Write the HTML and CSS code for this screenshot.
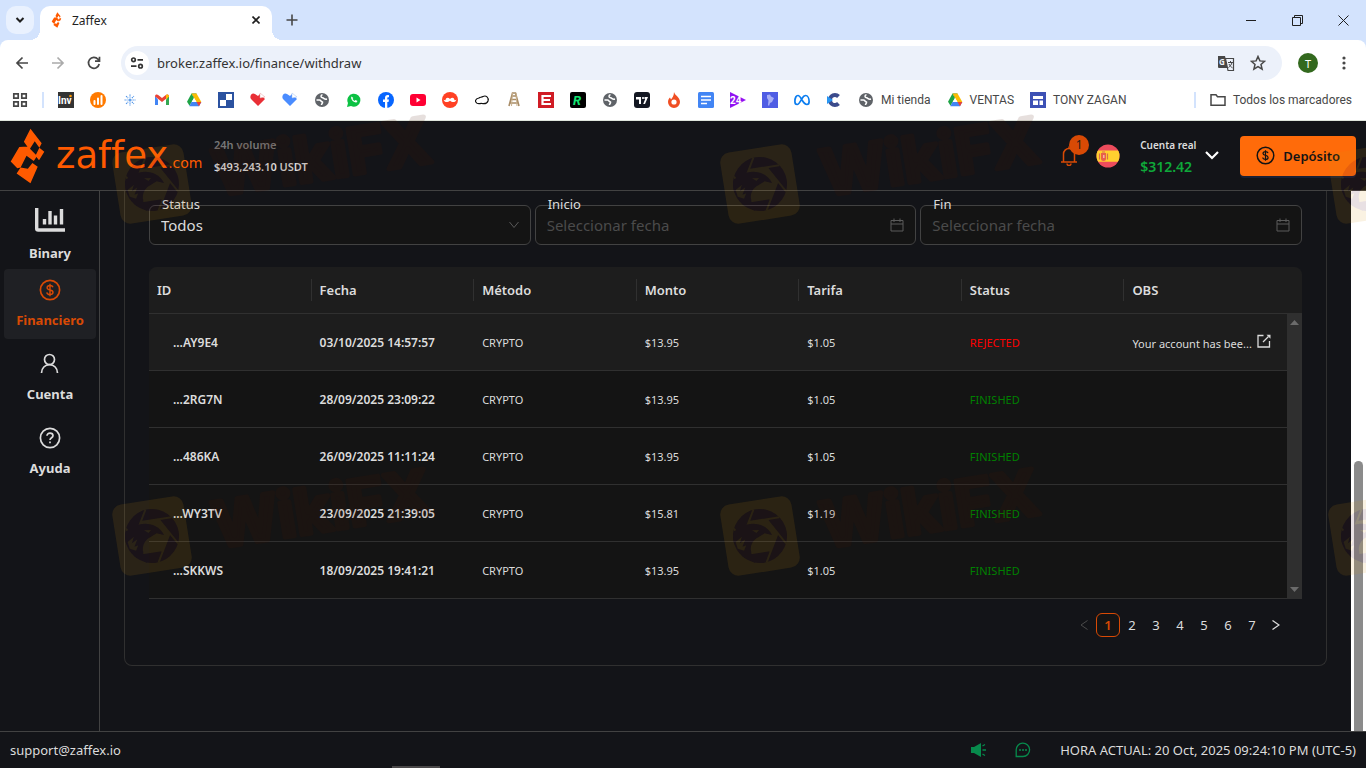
FILE: index.html
```html
<!DOCTYPE html>
<html lang="es">
<head>
    <meta charset="UTF-8">
    <meta name="viewport" content="width=device-width, initial-scale=1.0">
    <title>Zaffex</title>
    <link rel="stylesheet" href="styles.css">
</head>
<body>
    <!-- shared icons -->
    <svg class="sprite" aria-hidden="true">
        <symbol id="zaffex" viewBox="0 0 106 170">
            <path d="M62 2 96 46 89 60 104 72 88 98 77 84 89 60 75 40 59 65 42 42ZM28 58 54 56 82 85 72 100 50 84 32 120 22 122 2 102ZM32 120 54 124 68 106 84 118 62 168 20 138Z"/>
        </symbol>
        <symbol id="globe" viewBox="0 0 16 16">
            <circle cx="8" cy="8" r="7" fill="#5f6368"/>
            <path d="M2.500 8h3c1.500 0 1.500 2 3 2 .5 1.500-1 1.500-1 3M8.500 2.800c-2 .3-2 2.700 0 3s1.500 2 4.500 1.200" fill="none" stroke="#fff" stroke-width="1.500"/>
        </symbol>
        <symbol id="drive" viewBox="0 0 16 16">
            <path d="M5.500 1.500h5L8 6Z" fill="#188038"/>
            <path d="M5.500 1.500 8 6 3.500 13.800 1 9.800Z" fill="#1ea446"/>
            <path d="M5.500 1.500h5L15.300 10h-4.800Z" fill="#fbbc04"/>
            <path d="M5.500 10h9.800L13 14.200H3.300Z" fill="#4285f4"/>
            <path d="M10.500 10h4.800L13 14.200Z" fill="#ea4335"/>
            <path d="M8 6 5.700 10h4.700Z" fill="#fff"/>
        </symbol>
        <symbol id="dollar" viewBox="0 0 22 22">
            <g fill="none" stroke="currentColor" stroke-width="1.700">
                <circle cx="11" cy="11" r="9.600"/>
                <path d="M14 8.300C13.600 7 12.500 6.500 11 6.500c-1.700 0-2.900.8-2.900 2.200 0 3.200 5.900 1.300 5.900 4.500 0 1.500-1.300 2.300-3 2.300s-3-.8-3.200-2.200M11 4.800v12.400" stroke-width="1.400"/>
            </g>
        </symbol>
        <symbol id="calendar" viewBox="0 0 14 14">
            <path d="M1 2.500h12v10.500H1ZM1 6h12M4 .5v3.500M10 .5v3.500" fill="none" stroke="currentColor"/>
        </symbol>
        <!-- eagle inside a camera shutter -->
        <symbol id="lens" overflow="visible">
            <circle cx="40" cy="84" r="27" class="lens-solid"/>
            <path class="lens-gap" d="M58 84 49 99.600H31L22 84 31 68.400H49Z"/>
            <path class="lens-line" d="M58 84 42.500 110.900M49 99.600H18M31 99.600 15.400 72.700M22 84 37.500 57.100M31 68.400H62M49 68.400 64.600 95.300"/>
            <path class="lens-solid" d="M14 77C24 67 47 68 52 85L45 82 38 85C29 88 26 97 31 110L19 101 13 86Z"/>
            <path class="lens-gap" d="m33 77 7 1-3 2.500ZM15 86l7-4-3 6 6-3-4 7 4-1-3 5-6-3Z"/>
        </symbol>
        <mask id="lens-in" maskUnits="userSpaceOnUse" x="0" y="40" width="84" height="84">
            <use href="#lens" class="mask-in"/>
        </mask>
        <mask id="lens-out" maskUnits="userSpaceOnUse" x="0" y="40" width="84" height="84">
            <rect x="0" y="40" width="84" height="84" fill="#fff"/>
            <use href="#lens" class="mask-out"/>
        </mask>
        <symbol id="watermark" viewBox="0 0 340 120" overflow="visible">
            <g transform="rotate(-9 40 84)">
                <rect x="4" y="48" width="72" height="72" rx="10" fill="#d29614" fill-opacity=".12" mask="url(#lens-out)"/>
                <rect x="4" y="48" width="72" height="72" fill="#4a1024" fill-opacity=".13" mask="url(#lens-in)"/>
                <text x="102" y="106" class="mark-text">WikiFX</text>
            </g>
        </symbol>
    </svg>

    <div class="browser">
        <div class="tab-strip">
            <button class="tab-search" aria-label="Buscar pestañas">
                <svg width="10" height="8" viewBox="0 0 10 8"><path d="m1.500 2 3.500 3.500L8.500 2" fill="none" stroke="#1f1f1f" stroke-width="2"/></svg>
            </button>
            <div class="tab">
                <svg class="tab-icon" width="11" height="16" fill="#ff5a00"><use href="#zaffex"/></svg>
                <span class="tab-title">Zaffex</span>
                <button class="plain" aria-label="Cerrar pestaña">
                    <svg width="8" height="8" viewBox="0 0 8 8"><path d="m.5.5 7 7m0-7-7 7" stroke="#1f1f1f" stroke-width="1.600"/></svg>
                </button>
            </div>
            <button class="plain new-tab" aria-label="Nueva pestaña">
                <svg width="12" height="12" viewBox="0 0 12 12"><path d="M6 .5v11M.5 6h11" stroke="#474747" stroke-width="1.600"/></svg>
            </button>
            <div class="window-buttons">
                <button class="plain" aria-label="Minimizar"><svg width="10" height="10"><path d="M0 5.500h10" stroke="#1f1f1f"/></svg></button>
                <button class="plain" aria-label="Restaurar"><svg width="11" height="11"><path d="M.5 2.500h8v8h-8ZM2.500 2.500v-2h8v8h-2" fill="none" stroke="#1f1f1f"/></svg></button>
                <button class="plain" aria-label="Cerrar"><svg width="11" height="11"><path d="m.5.5 10 10m0-10-10 10" stroke="#1f1f1f"/></svg></button>
            </div>
        </div>

        <div class="toolbar">
            <button class="plain nav-btn" aria-label="Atrás"><svg width="14" height="14" viewBox="0 0 14 14"><path d="M13 7H2m5.500-5.500L2 7l5.500 5.500" fill="none" stroke="#474747" stroke-width="1.700"/></svg></button>
            <button class="plain nav-btn" aria-label="Adelante"><svg width="14" height="14" viewBox="0 0 14 14"><path d="M1 7h11M6.500 1.500 12 7l-5.500 5.500" fill="none" stroke="#ababab" stroke-width="1.700"/></svg></button>
            <button class="plain nav-btn" aria-label="Recargar"><svg width="14" height="14" viewBox="0 0 14 14"><path d="M12.200 8A5.400 5.400 0 1 1 11 3.300L12 4.500M12.500.8v4.400H8" fill="none" stroke="#474747" stroke-width="1.700"/></svg></button>
            <div class="address">
                <button class="site-info" aria-label="Información del sitio">
                    <svg width="14" height="12" viewBox="0 0 14 12"><g fill="none" stroke="#333" stroke-width="1.700"><circle cx="3.500" cy="2.800" r="1.800"/><path d="M7.500 2.800H13M1 9.200h5.500"/><circle cx="10.500" cy="9.200" r="1.800"/></g></svg>
                </button>
                <input class="url" type="text" value="broker.zaffex.io/finance/withdraw" aria-label="Dirección">
                <button class="plain" aria-label="Traducir">
                    <svg width="18" height="17" viewBox="0 0 18 17"><path d="M1 1h7l3 12H2a1 1 0 0 1-1-1Z" fill="#474747"/><path d="M8.500 3.500H16.500v12H11L8.500 3.500Z" fill="#ecf1fa" stroke="#474747" stroke-width="1.200"/><text x="2" y="10" class="tiny-g">G</text><path d="M11 7.500h5M13.500 6v1.500M15 7.500c-.5 2-2 4-3.500 5M12 9c1 2 2 3 3.500 3.800" fill="none" stroke="#474747"/></svg>
                </button>
                <button class="plain star" aria-label="Añadir a marcadores">
                    <svg width="16" height="16" viewBox="0 0 16 16"><path d="m8 1.500 1.900 4.400 4.700.4-3.600 3.100 1.100 4.700L8 11.600l-4.100 2.500L5 9.400 1.400 6.300l4.700-.4Z" fill="none" stroke="#474747" stroke-width="1.500"/></svg>
                </button>
            </div>
            <button class="avatar" aria-label="Perfil">T</button>
            <button class="plain" aria-label="Menú"><svg width="4" height="14" fill="#474747"><circle cx="2" cy="2" r="1.600"/><circle cx="2" cy="7" r="1.600"/><circle cx="2" cy="12" r="1.600"/></svg></button>
        </div>

        <nav class="bookmarks">
            <svg width="16" height="16" class="apps"><path d="M1.800 1.800h4.400v4.400H1.800ZM9.800 1.800h4.400v4.400H9.800ZM1.800 9.800h4.400v4.400H1.800ZM9.800 9.800h4.400v4.400H9.800Z" fill="none" stroke="#474747" stroke-width="1.700"/></svg>
            <span class="divider"></span>
            <svg width="16" height="16"><path d="M0 0h16v16H0Z" fill="#333"/><text x="0" y="12" class="inv">Inv</text><circle cx="12.500" cy="4" r="1.300" fill="#f90"/></svg>
            <svg width="16" height="16"><circle cx="8" cy="8" r="8" fill="#ff7a00"/><path d="M4.500 12V9M8 12V6.500M11.500 12V4" stroke="#fff" stroke-width="2" stroke-linecap="round"/></svg>
            <svg width="16" height="16"><g fill="none" stroke="#4f94e8" stroke-width="1.200"><path d="M8 2.500v3M8 10.500v3M2.500 8h3M10.500 8h3M4.100 4.100l2 2M9.900 9.900l2 2M4.100 11.900l2-2M9.900 6.100l2-2" stroke-dasharray="1.300 .7"/><circle cx="8" cy="8" r="1"/></g></svg>
            <svg width="16" height="16"><path d="M1 4v9h3V7.500Z" fill="#4285f4"/><path d="M12 7.500V13h3V4Z" fill="#34a853"/><path d="M1 4.500C1 2.500 3 2 4.500 3.300L8 6l3.500-2.700C13 2 15 2.500 15 4.500L8 10Z" fill="#ea4335"/><path d="M12 3c1.500-1 3 0 3 1.500L12 7.500Z" fill="#fbbc04"/></svg>
            <svg width="16" height="16"><use href="#drive"/></svg>
            <svg width="16" height="16"><path d="M0 0h16v16H0Z" fill="#2b52a0"/><path d="M8 2h6v6H8ZM2 8h6v6H2Z" fill="#fff"/></svg>
            <svg width="16" height="16"><path d="M8 14 1 7C-1 4 2 0 5 2l3 2 2-2 5 5Z" fill="#e92f36"/><path d="m10 1 5 4-5 1Z" fill="#fff" stroke="#e9a1a1" stroke-width=".5"/></svg>
            <svg width="16" height="16"><path d="M8 14 1 7C-1 4 2 0 5 2l3 2 2-2 5 5Z" fill="#4a8cff"/><path d="m10 1 5 4-5 1Z" fill="#fff" stroke="#a3c0f2" stroke-width=".5"/></svg>
            <svg width="16" height="16"><use href="#globe"/></svg>
            <svg width="16" height="16"><path d="m1 15 1-4A6.500 6.500 0 1 1 5 14Z" fill="#0cc143"/><path d="M5.500 4.500c-1.500 2 2 6.500 5 6l1-1.500-2-1-1 1-2-2 .8-1Z" fill="#fff"/></svg>
            <svg width="16" height="16"><circle cx="8" cy="8" r="8" fill="#0866ff"/><path d="M7 16V10H5V7.500h2V6c0-2.500 1.500-3.300 4-2.800v2C9.500 5 9.300 5.400 9.300 6.500v1H11L10.500 10H9.300v6Z" fill="#fff"/></svg>
            <svg width="16" height="16"><rect y="2" width="16" height="12" rx="3" fill="#ff0033"/><path d="m6.500 5.500 4 2.500-4 2.500Z" fill="#fff"/></svg>
            <svg width="16" height="16"><circle cx="8" cy="8" r="8" fill="#ff4124"/><path d="M8 7C6 5 4 5.500 3.500 8 3 8.500 2 8 1.500 7.500 2.500 11 6 10.500 8 8.800c2 1.700 5.500 2.200 6.500-1.300-.5.500-1.500 1-2 .5C12 5.500 10 5 8 7Z" fill="#fff"/></svg>
            <svg width="16" height="16"><path d="M5 6C6 5 7.500 5.500 9 4.500c3-1.500 6 1 5 4.500-.8 2.500-3 3-6 2.500-2-.2-3 .5-5-.2C.5 10 1 6.500 5 6Z" fill="none" stroke="#111" stroke-width="1.200"/></svg>
            <svg width="16" height="16"><path d="m3 14 3.500-13h3L13 14M4 11h8M5 7.500h6M6 4h4" fill="none" stroke="#a88c67" stroke-width="1.600"/><path d="m6.500 1-1 13M10 1l1 13" stroke="#c9b18d"/></svg>
            <svg width="16" height="16"><path d="M0 0h16v16H0Z" fill="#d01c25"/><path d="M13 4H4.500v8H13M4.500 8H12" fill="none" stroke="#fff" stroke-width="2.200"/></svg>
            <svg width="16" height="16"><rect width="16" height="16" rx="2" fill="#000"/><text x="3" y="13" class="letter-r">R</text></svg>
            <svg width="16" height="16"><use href="#globe"/></svg>
            <svg width="16" height="16"><rect width="16" height="16" rx="3" fill="#131722"/><path d="M2 5h5v7H5V7.500H2ZM10.500 5H14l-3 7H9.200l2-5h-.7Z" fill="#fff"/><circle cx="9" cy="6" r="1.100" fill="#fff"/></svg>
            <svg width="16" height="16"><path d="M8 0c.5 3 6 5 6 10a6 6 0 0 1-12 0c0-2 1-4 2-4.500L5 7.500C6 6 8 4 8 0Z" fill="#f04e23"/><circle cx="8" cy="10" r="2.600" fill="#fff"/></svg>
            <svg width="16" height="16"><rect width="16" height="16" rx="1.500" fill="#4285f4"/><path d="M3 4.500h10M3 8h10M3 11.500h6" stroke="#fff" stroke-width="1.500"/></svg>
            <svg width="16" height="16"><path d="M0 0 16 8 0 16Z" fill="#9013f2"/><text x="0" y="12" class="num24">24</text></svg>
            <svg width="16" height="16"><path d="M0 0h16v16H0Z" fill="#4f5de4"/><path d="M5 3 8 2.500l1 2 3 1.500-2 4-2 1-1 3-1-1 .5-4.500L5 6Z" fill="#a7aef5"/></svg>
            <svg width="16" height="16"><path d="M8 8C6.500 5.500 5.500 3.500 4 3.500 2 3.500.9 6.500.9 9.500c0 2 1 3 2.200 3C5 12.500 6.300 9.500 8 6.500c1-1.800 2-3 3.500-3 2.200 0 3.600 3 3.600 6 0 2-.9 3-2.100 3C11 12.500 9.500 10.500 8 8Z" fill="none" stroke="#0b7df0" stroke-width="1.700"/></svg>
            <svg width="16" height="16"><path d="M12.500 4.500A5 5 0 1 0 12.500 11.500" fill="none" stroke="#3b4b8c" stroke-width="4"/><path d="m1 4 6 4-6 4Z" fill="#2796f3"/></svg>
            <a href="#" class="bookmark"><svg width="16" height="16"><use href="#globe"/></svg>Mi tienda</a>
            <a href="#" class="bookmark"><svg width="16" height="16"><use href="#drive"/></svg>VENTAS</a>
            <a href="#" class="bookmark"><svg width="16" height="16"><path d="M0 0h16v16H0Z" fill="#3d51b5"/><path d="M3 4h10v3H3ZM3 8.500h5V13H3ZM9.500 8.500H13V13H9.500Z" fill="#fff"/></svg>TONY ZAGAN</a>
            <span class="divider push"></span>
            <a href="#" class="bookmark"><svg width="16" height="14"><path d="M1 1.800h5l1.500 2H15v8.500H1Z" fill="none" stroke="#474747" stroke-width="1.500"/></svg>Todos los marcadores</a>
        </nav>
    </div>

    <div class="app">
        <header class="header">
            <a href="#" class="logo" aria-label="zaffex.com">
                <svg width="35" height="56" fill="#ff5a00"><use href="#zaffex"/></svg>
                <span class="logo-name">zaffex</span><span class="logo-com">.com</span>
            </a>
            <div class="volume">
                <span class="volume-label">24h volume</span>
                <strong>$493,243.10 USDT</strong>
            </div>
            <button class="plain bell" aria-label="Notificaciones">
                <svg width="16" height="20" viewBox="0 0 16 20"><path d="M0 16h16M2.500 16V8a5.500 5.500 0 0 1 11 0v8M8 2.500V.5M6 17.500a2 2 0 0 0 4 0" fill="none" stroke="#d84a05" stroke-width="1.500"/></svg>
                <span class="badge">1</span>
            </button>
            <svg class="flag" width="24" height="24" viewBox="0 0 24 24">
                <clipPath id="round"><circle cx="12" cy="12" r="11.500"/></clipPath>
                <g clip-path="url(#round)"><path d="M0 0h24v24H0Z" fill="#ec4c5c"/><path d="M0 6.500h24v11.300H0Z" fill="#ffd02f"/><path d="M5 9h5v5.500a2.500 2.500 0 0 1-5 0Z" fill="#e8604a"/><path d="M3.500 9.500v6M11.500 9.500v6M6 8h3" stroke="#d86d4c" stroke-width="1.200"/><path d="M7 11h1.500v3H7Z" fill="#f3b6a0"/></g>
            </svg>
            <div class="account">
                <span class="account-type">Cuenta real</span>
                <span class="balance">$312.42</span>
            </div>
            <svg class="caret" width="14" height="9" viewBox="0 0 14 9"><path d="m1 1 6 6 6-6" fill="none" stroke="#fff" stroke-width="2.200"/></svg>
            <button class="deposit">
                <svg width="19" height="19"><use href="#dollar"/></svg>Depósito
            </button>
        </header>

        <div class="body">
            <nav class="sidebar">
                <a href="#" class="side-item first">
                    <svg width="30" height="24" viewBox="0 0 30 24"><path d="M1.700 0v20.500a1.500 1.500 0 0 0 1.500 1.500H30" fill="none" stroke="#dcdcdc" stroke-width="3.400"/><path d="M9.500 11v5.500M15 3v13.500M20.500 7.500v9M26.500 1v15.500" stroke="#dcdcdc" stroke-width="3.400"/></svg>
                    Binary
                </a>
                <a href="#" class="side-item active">
                    <svg width="22" height="22"><use href="#dollar"/></svg>
                    Financiero
                </a>
                <a href="#" class="side-item">
                    <svg width="22" height="22" viewBox="0 0 22 22"><g fill="none" stroke="currentColor" stroke-width="1.700"><circle cx="10.500" cy="6.500" r="5"/><path d="M2.500 20c0-5 3.500-8.300 8-8.300s8 3.300 8 8.300"/></g></svg>
                    Cuenta
                </a>
                <a href="#" class="side-item">
                    <svg width="22" height="22" viewBox="0 0 22 22"><g fill="none" stroke="currentColor" stroke-width="1.700"><circle cx="11" cy="11" r="9.600"/><path d="M8 8.800c0-1.700 1.300-2.600 3-2.600s3 1 3 2.500c0 2-3 2.100-3 4.300"/><path d="M11 14.500v1.700"/></g></svg>
                    Ayuda
                </a>
            </nav>

            <main class="main">
                <section class="card">
                    <form class="filters">
                        <div class="field">
                            <label for="status">Status</label>
                            <select id="status"><option>Todos</option></select>
                            <svg width="10" height="8" viewBox="0 0 10 8"><path d="m.5 1 4.500 5.500L9.500 1" fill="none" stroke="currentColor"/></svg>
                        </div>
                        <div class="field">
                            <label for="inicio">Inicio</label>
                            <input id="inicio" type="text" placeholder="Seleccionar fecha">
                            <svg width="14" height="14"><use href="#calendar"/></svg>
                        </div>
                        <div class="field">
                            <label for="fin">Fin</label>
                            <input id="fin" type="text" placeholder="Seleccionar fecha">
                            <svg width="14" height="14"><use href="#calendar"/></svg>
                        </div>
                    </form>

                    <div class="table-box">
                        <div class="table-wrap">
                            <table>
                                <thead>
                                    <tr><th>ID</th><th>Fecha</th><th>Método</th><th>Monto</th><th>Tarifa</th><th>Status</th><th>OBS</th></tr>
                                </thead>
                                <tbody>
                                    <tr class="hover">
                                        <td class="id">...AY9E4</td><td class="date">03/10/2025 14:57:57</td><td>CRYPTO</td><td>$13.95</td><td>$1.05</td><td class="rejected">REJECTED</td>
                                        <td class="obs">Your account has bee...<svg width="14" height="14" viewBox="0 0 14 14"><path d="M6.500 1.500H1v11.500h11.500V7M6 8l5.500-5.500" fill="none" stroke="currentColor" stroke-width="1.300"/><path d="M9.500.8h4v4Z" fill="currentColor"/></svg></td>
                                    </tr>
                                    <tr><td class="id">...2RG7N</td><td class="date">28/09/2025 23:09:22</td><td>CRYPTO</td><td>$13.95</td><td>$1.05</td><td class="finished">FINISHED</td><td></td></tr>
                                    <tr><td class="id">...486KA</td><td class="date">26/09/2025 11:11:24</td><td>CRYPTO</td><td>$13.95</td><td>$1.05</td><td class="finished">FINISHED</td><td></td></tr>
                                    <tr><td class="id">...WY3TV</td><td class="date">23/09/2025 21:39:05</td><td>CRYPTO</td><td>$15.81</td><td>$1.19</td><td class="finished">FINISHED</td><td></td></tr>
                                    <tr><td class="id">...SKKWS</td><td class="date">18/09/2025 19:41:21</td><td>CRYPTO</td><td>$13.95</td><td>$1.05</td><td class="finished">FINISHED</td><td></td></tr>
                                </tbody>
                            </table>
                        </div>
                        <div class="table-scroll">
                            <svg width="9" height="5"><path d="M0 5 4.500 0 9 5Z" fill="#6b6b6b"/></svg>
                            <svg width="9" height="5"><path d="m0 0 4.500 5L9 0Z" fill="#6b6b6b"/></svg>
                        </div>
                    </div>

                    <div class="pagination">
                        <button aria-label="Anterior" disabled><svg width="8" height="10"><path d="M7.500.5 1 5l6.500 4.500" fill="none" stroke="currentColor"/></svg></button>
                        <button class="current">1</button>
                        <button>2</button>
                        <button>3</button>
                        <button>4</button>
                        <button>5</button>
                        <button>6</button>
                        <button>7</button>
                        <button aria-label="Siguiente"><svg width="8" height="10"><path d="M.5.5 7 5 .5 9.500" fill="none" stroke="currentColor" stroke-width="1.300"/></svg></button>
                    </div>
                </section>
            </main>

            <div class="page-scroll"><div class="page-thumb"></div></div>
        </div>

        <footer class="footer">
            <a href="#">support@zaffex.io</a>
            <div class="footer-right">
                <svg width="15" height="14" viewBox="0 0 15 14" fill="#078a4c"><path d="M0 4h3l7-4v14l-7-4H0Z"/><path d="M11.500 7H15M11.500 3l2.500-1.500M11.500 11l2.500 1.500" stroke="#078a4c" stroke-width="1.300"/></svg>
                <svg width="16" height="16" viewBox="0 0 16 16"><path d="M1.200 14.500V8A6.700 6.700 0 1 1 8 14.500Z" fill="none" stroke="#078a4c" stroke-width="1.300"/><path d="M4 7.200h2v1.600H4ZM7 7.200h2v1.600H7ZM10 7.200h2v1.600h-2Z" fill="#078a4c"/></svg>
                <span>HORA ACTUAL: 20 Oct, 2025 09:24:10 PM (UTC-5)</span>
            </div>
        </footer>
        <div class="bottom-thumb"></div>
    </div>

    <svg class="overlay" aria-hidden="true">
        <use href="#watermark" x="112" y="100" width="340" height="120"/>
        <use href="#watermark" x="720" y="100" width="340" height="120"/>
        <use href="#watermark" x="1328" y="100" width="340" height="120"/>
        <use href="#watermark" x="112" y="452" width="340" height="120"/>
        <use href="#watermark" x="720" y="452" width="340" height="120"/>
        <use href="#watermark" x="1328" y="452" width="340" height="120"/>
    </svg>
</body>
</html>
```
FILE: styles.css
```css
* {
    margin: 0;
    padding: 0;
    box-sizing: border-box;
}

body {
    height: 100vh;
    display: flex;
    flex-direction: column;
    overflow: hidden;
    position: relative;
    background: #131418;
    color: #dcdcdc;
    font-family: "Noto Sans", "Open Sans", sans-serif;
    font-size: 13px;
}

button, input, select {
    font: inherit;
    color: inherit;
    border: none;
    background: none;
    outline: none;
}

a {
    color: inherit;
    text-decoration: none;
}

svg {
    display: block;
    flex-shrink: 0;
}

.sprite {
    position: absolute;
    width: 0;
    height: 0;
}

.plain {
    display: flex;
    align-items: center;
    justify-content: center;
}

/* browser window */
.browser {
    background: #d3e3fd;
    color: #474747;
    border-bottom: 1px solid #dfe5dc;
    font-size: 12px;
}

.tab-strip {
    display: flex;
    align-items: center;
    height: 40px;
    padding-left: 6px;
}

.tab-search {
    display: flex;
    align-items: center;
    justify-content: center;
    width: 28px;
    height: 28px;
    margin-right: 6px;
    border-radius: 10px;
    background: #e9f1fe;
}

.tab {
    position: relative;
    display: flex;
    align-items: center;
    align-self: flex-end;
    width: 232px;
    height: 34px;
    padding: 0 12px 6px 11px;
    border-radius: 10px 10px 0 0;
    background: #fff;
    color: #1f1f1f;
}

.tab::before,
.tab::after {
    content: "";
    position: absolute;
    bottom: 0;
    width: 10px;
    height: 10px;
}

.tab::before {
    right: 100%;
    background: radial-gradient(circle at 0 0, transparent 10px, #fff 10px);
}

.tab::after {
    left: 100%;
    background: radial-gradient(circle at 100% 0, transparent 10px, #fff 10px);
}

.tab-title {
    flex: 1;
    margin-left: 10px;
}

.new-tab {
    margin-left: 14px;
}

.window-buttons {
    display: flex;
    margin-left: auto;
}

.window-buttons button {
    width: 46px;
    height: 40px;
}

.toolbar {
    display: flex;
    align-items: center;
    height: 46px;
    padding: 0 20px 0 4px;
    border-radius: 8px 8px 0 0;
    background: #fff;
}

.nav-btn {
    width: 36px;
}

.address {
    flex: 1;
    display: flex;
    align-items: center;
    height: 34px;
    margin: 0 16px 0 9px;
    padding: 0 16px 0 4px;
    border-radius: 17px;
    background: #ecf1fa;
}

.site-info {
    display: flex;
    align-items: center;
    justify-content: center;
    width: 24px;
    height: 24px;
    border-radius: 50%;
    background: #fff;
}

.url {
    flex: 1;
    height: 28px;
    margin-left: 8px;
    font-size: 13px;
    color: #333;
}

.star {
    margin-left: 15px;
}

.avatar {
    width: 20px;
    height: 20px;
    margin-right: 24px;
    border-radius: 50%;
    background: #33691e;
    color: #fff;
    font-size: 11px;
}

.bookmarks {
    display: flex;
    align-items: center;
    gap: 16px;
    height: 34px;
    padding: 0 14px 6px 12px;
    background: #fff;
    font-family: Roboto, sans-serif;
}

.divider {
    width: 2px;
    height: 16px;
    margin: 0 -2px;
    background: #d3e3fd;
}

.push {
    margin-left: auto;
}

.bookmark {
    display: flex;
    align-items: center;
    gap: 7px;
}

.tiny-g {
    font-size: 8px;
    font-weight: bold;
    fill: #ecf1fa;
}

.inv {
    font-size: 10px;
    font-weight: bold;
    fill: #fff;
}

.letter-r {
    font-size: 13px;
    font-weight: bold;
    font-style: italic;
    fill: #12e372;
}

.num24 {
    font-size: 10px;
    font-weight: bold;
    fill: #fff;
}

/* trading app */
.app {
    flex: 1;
    display: flex;
    flex-direction: column;
    min-height: 0;
    position: relative;
}

.header {
    display: flex;
    align-items: center;
    height: 70px;
    padding: 0 10px;
    border-bottom: 1px solid #424242;
}

.logo {
    display: flex;
    align-items: center;
    width: 190px;
    color: #ff5a00;
    font-family: "DejaVu Sans", sans-serif;
}

.logo-name {
    margin-left: 11px;
    font-size: 37px;
    line-height: 56px;
}

.logo-com {
    font-size: 14px;
    padding-top: 14px;
}

.volume {
    display: flex;
    flex-direction: column;
    gap: 6px;
    margin: 0 auto 0 14px;
    font-size: 11px;
    line-height: 16px;
    font-weight: 600;
}

.volume strong {
    font-weight: 600;
}

.volume-label {
    color: #777;
}

.bell {
    position: relative;
    width: 16px;
    height: 20px;
}

.badge {
    position: absolute;
    left: 8px;
    top: -11px;
    width: 20px;
    height: 20px;
    border-radius: 50%;
    background: #d84a05;
    color: #1a1a1a;
    font-size: 12px;
    line-height: 20px;
}

.flag {
    margin-left: 19px;
}

.account {
    display: flex;
    flex-direction: column;
    gap: 2px;
    margin-left: 20px;
    line-height: 20px;
}

.account-type {
    font-size: 10px;
    font-weight: 600;
}

.balance {
    color: #0fa83a;
    font-size: 14px;
    font-weight: 600;
}

.caret {
    margin: 0 21px 0 9px;
}

.deposit {
    display: flex;
    align-items: center;
    gap: 8px;
    height: 40px;
    padding: 0 16px;
    border-radius: 4px;
    background: #ff6b0a;
    color: #141414;
    font-size: 13px;
    font-weight: 600;
    box-shadow: 0 2px 0 #1b2033;
}

.body {
    flex: 1;
    display: flex;
    min-height: 0;
}

.sidebar {
    width: 100px;
    padding: 8px 3px 0 4px;
    border-right: 1px solid #424242;
    font-weight: bold;
}

.side-item {
    display: flex;
    flex-direction: column;
    align-items: center;
    gap: 9px;
    height: 70px;
    margin-bottom: 4px;
    padding-top: 10px;
    border-radius: 4px;
    line-height: 20px;
}

.side-item.first {
    gap: 11px;
    margin-bottom: 0;
    padding-top: 9px;
}

.side-item.active {
    background: #1f2024;
    color: #d84a05;
}

.main {
    flex: 1;
    min-width: 0;
    padding: 0 24px;
}

.card {
    padding: 14px 24px 28px;
    border: 1px solid #303030;
    border-top: none;
    border-radius: 0 0 8px 8px;
}

.filters {
    display: grid;
    grid-template-columns: repeat(3, 1fr);
    gap: 4px;
}

.field {
    position: relative;
    color: #5a5a5a;
}

.field label {
    position: absolute;
    left: 13px;
    top: -11px;
    color: #dcdcdc;
    line-height: 20px;
}

.field select,
.field input {
    width: 100%;
    height: 40px;
    padding: 0 11px;
    border: 1px solid #424242;
    border-radius: 6px;
    background: #141414;
    color: #dcdcdc;
    font-size: 15px;
    appearance: none;
}

.field input::placeholder {
    color: #4b4b4b;
    opacity: 1;
}

.field svg {
    position: absolute;
    right: 12px;
    top: 13px;
}

.field select + svg {
    top: 16px;
}

.table-box {
    display: flex;
    margin-top: 22px;
    border-radius: 8px 8px 0 0;
    background: linear-gradient(#1d1d1d 46px, #141414 46px);
    overflow: hidden;
}

.table-wrap {
    flex: 1;
    min-width: 0;
}

table {
    width: 100%;
    table-layout: fixed;
    border-collapse: separate;
    border-spacing: 0;
    font-size: 11px;
}

th, td {
    padding: 0 8px;
    border-bottom: 1px solid #303030;
    text-align: left;
    white-space: nowrap;
}

th {
    height: 47px;
    font-size: 13px;
    font-weight: 600;
    background: linear-gradient(#303030, #303030) right center / 1px 22px no-repeat;
}

th:last-child {
    background: none;
}

td {
    height: 57px;
}

.hover td {
    background: #1d1d1d;
}

.id {
    padding-left: 24px;
}

.id,
.date {
    font-size: 12px;
    font-weight: 600;
}

.rejected {
    color: #f00;
}

.finished {
    color: #008000;
}

.obs svg {
    display: inline-block;
    margin-left: 5px;
}

.table-scroll {
    display: flex;
    flex-direction: column;
    align-items: center;
    justify-content: space-between;
    width: 15px;
    margin-top: 46px;
    padding: 7px 0;
    background: #2f2f2f;
}

.pagination {
    display: flex;
    justify-content: flex-end;
    margin: 14px 14px 0 0;
}

.pagination button {
    display: flex;
    align-items: center;
    justify-content: center;
    width: 24px;
    height: 24px;
    border-radius: 6px;
}

.pagination button:disabled {
    color: #4b4b4b;
}

.pagination .current {
    border: 1px solid #d84a05;
    background: #141414;
    color: #d84a05;
    font-weight: 600;
}

.page-scroll {
    display: flex;
    flex-direction: column;
    justify-content: flex-end;
    width: 15px;
    padding: 0 3px;
    background: #fff;
}

.page-thumb {
    height: 50%;
    border-radius: 5px 5px 0 0;
    background: #8b8b8b;
}

.footer {
    display: flex;
    align-items: center;
    justify-content: space-between;
    height: 37px;
    padding: 0 10px;
    border-top: 1px solid #424242;
}

.footer-right {
    display: flex;
    align-items: center;
    gap: 29px;
}

.bottom-thumb {
    position: absolute;
    left: 392px;
    bottom: 0;
    width: 48px;
    height: 2px;
    background: #4a4849;
}

/* watermark */
.overlay {
    position: absolute;
    left: 0;
    top: 0;
    width: 100%;
    height: 100%;
    pointer-events: none;
}

.mask-in {
    --solid: #fff;
    --gap: #000;
}

.mask-out {
    --solid: #000;
    --gap: #fff;
}

.lens-solid {
    fill: var(--solid);
}

.lens-gap {
    fill: var(--gap);
}

.lens-line {
    fill: none;
    stroke: var(--gap);
    stroke-width: 2;
}

.mark-text {
    font-family: Inter, "DejaVu Sans", sans-serif;
    font-size: 63px;
    font-weight: 700;
    fill: #4a1400;
    stroke: #4a1400;
    stroke-width: 5;
    stroke-linejoin: round;
    opacity: .13;
}
```
